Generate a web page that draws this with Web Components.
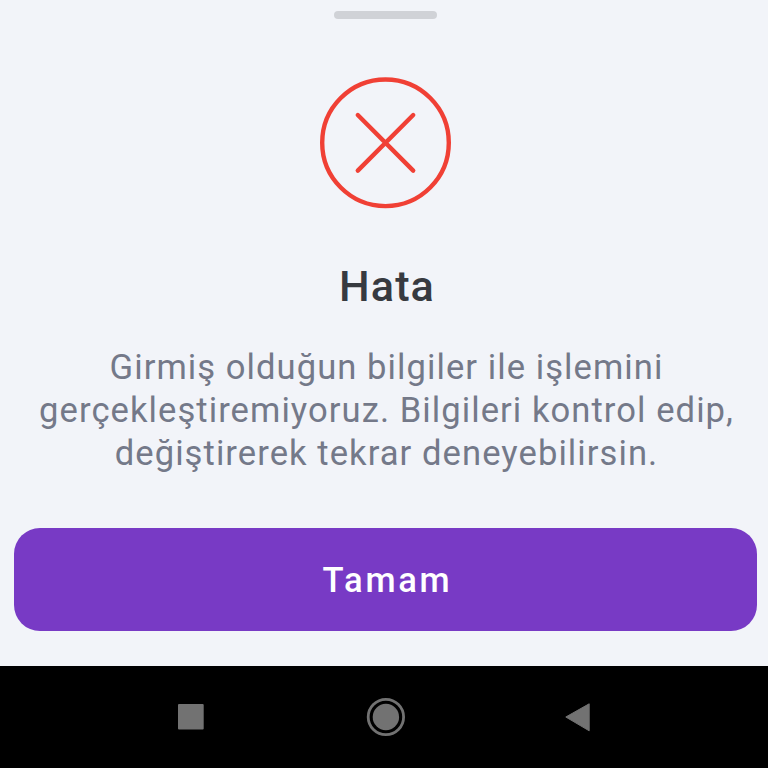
<!DOCTYPE html>
<html lang="tr">
<head>
<meta charset="utf-8">
<title>Hata</title>
<style>
  body {
    margin: 0;
    height: 768px;
    display: flex;
    flex-direction: column;
    background: #f2f4f9;
    font-family: Roboto, "Liberation Sans", sans-serif;
    overflow: hidden;
  }
</style>
</head>
<body>
<bottom-sheet>
  <error-icon slot="icon"></error-icon>
  <span slot="title">Hata</span>
  <span slot="message">Girmiş olduğun bilgiler ile işlemini<br>gerçekleştiremiyoruz. Bilgileri kontrol edip,<br>değiştirerek tekrar deneyebilirsin.</span>
  <main-button slot="action">Tamam</main-button>
</bottom-sheet>
<system-nav></system-nav>

<script>
class BottomSheet extends HTMLElement {
  constructor() {
    super();
    this.attachShadow({mode: "open"}).innerHTML = `
      <style>
        :host {
          display: flex;
          flex-direction: column;
          align-items: center;
          box-sizing: border-box;
          height: 666px;
          padding: 11px 11px 0 14px;
          background: #f2f4f9;
        }
        .handle {
          width: 103px;
          height: 8px;
          border-radius: 4px;
          background: #d0d2d7;
        }
        .icon {
          margin-top: 58px;
        }
        h1 {
          margin: 53px 0 0;
          padding-left: 3px;
          font-size: 43.2px;
          line-height: 50px;
          font-weight: 500;
          letter-spacing: 1.08px;
          color: #373a40;
        }
        p {
          margin: 34px 0 0;
          padding-left: 2px;
          font-size: 34.6px;
          line-height: 43.2px;
          letter-spacing: 1.06px;
          text-align: center;
          white-space: nowrap;
          color: #747989;
        }
        .action {
          align-self: stretch;
          margin-top: auto;
          margin-bottom: 35px;
        }
      </style>
      <div class="handle"></div>
      <div class="icon"><slot name="icon"></slot></div>
      <h1><slot name="title"></slot></h1>
      <p><slot name="message"></slot></p>
      <div class="action"><slot name="action"></slot></div>`;
  }
}

class ErrorIcon extends HTMLElement {
  constructor() {
    super();
    this.attachShadow({mode: "open"}).innerHTML = `
      <style>
        :host { display: block; }
        svg { display: block; }
      </style>
      <svg width="131" height="132" viewBox="0 0 131 132" fill="none" stroke="#f04035" stroke-width="4.4" stroke-linecap="round">
        <circle cx="65.5" cy="65.8" r="63.3"/>
        <path d="M37.8 38L93.2 93.6M93.2 38L37.8 93.6"/>
      </svg>`;
  }
}

class MainButton extends HTMLElement {
  constructor() {
    super();
    this.attachShadow({mode: "open"}).innerHTML = `
      <style>
        :host { display: block; }
        button {
          display: block;
          width: 100%;
          height: 103px;
          padding: 0 0 0 4px;
          border: 0;
          border-radius: 26px;
          background: #783ac5;
          color: #fff;
          font: 500 34.6px/102px Roboto, "Liberation Sans", sans-serif;
          letter-spacing: 2.7px;
        }
      </style>
      <button><slot></slot></button>`;
  }
}

class SystemNav extends HTMLElement {
  constructor() {
    super();
    this.attachShadow({mode: "open"}).innerHTML = `
      <style>
        :host {
          display: flex;
          flex: 1;
          align-items: center;
          justify-content: center;
          gap: 154px;
          background: #000;
        }
        svg { display: block; overflow: visible; }
      </style>
      <svg width="40" height="40" viewBox="0 0 40 40"><rect x="8" y="7" width="25.7" height="25.5" rx="1" fill="#727272"/></svg>
      <svg width="40" height="40" viewBox="0 0 40 40">
        <circle cx="21.9" cy="20" r="17.7" fill="none" stroke="#727272" stroke-width="2.8"/>
        <circle cx="21.9" cy="20" r="13.2" fill="#727272"/>
      </svg>
      <svg width="40" height="40" viewBox="0 0 40 40"><path d="M7.8 20L31.2 6.8V33.8Z" fill="#727272" stroke="#727272" stroke-width="1" stroke-linejoin="round"/></svg>`;
  }
}

customElements.define("bottom-sheet", BottomSheet);
customElements.define("error-icon", ErrorIcon);
customElements.define("main-button", MainButton);
customElements.define("system-nav", SystemNav);
</script>
</body>
</html>
